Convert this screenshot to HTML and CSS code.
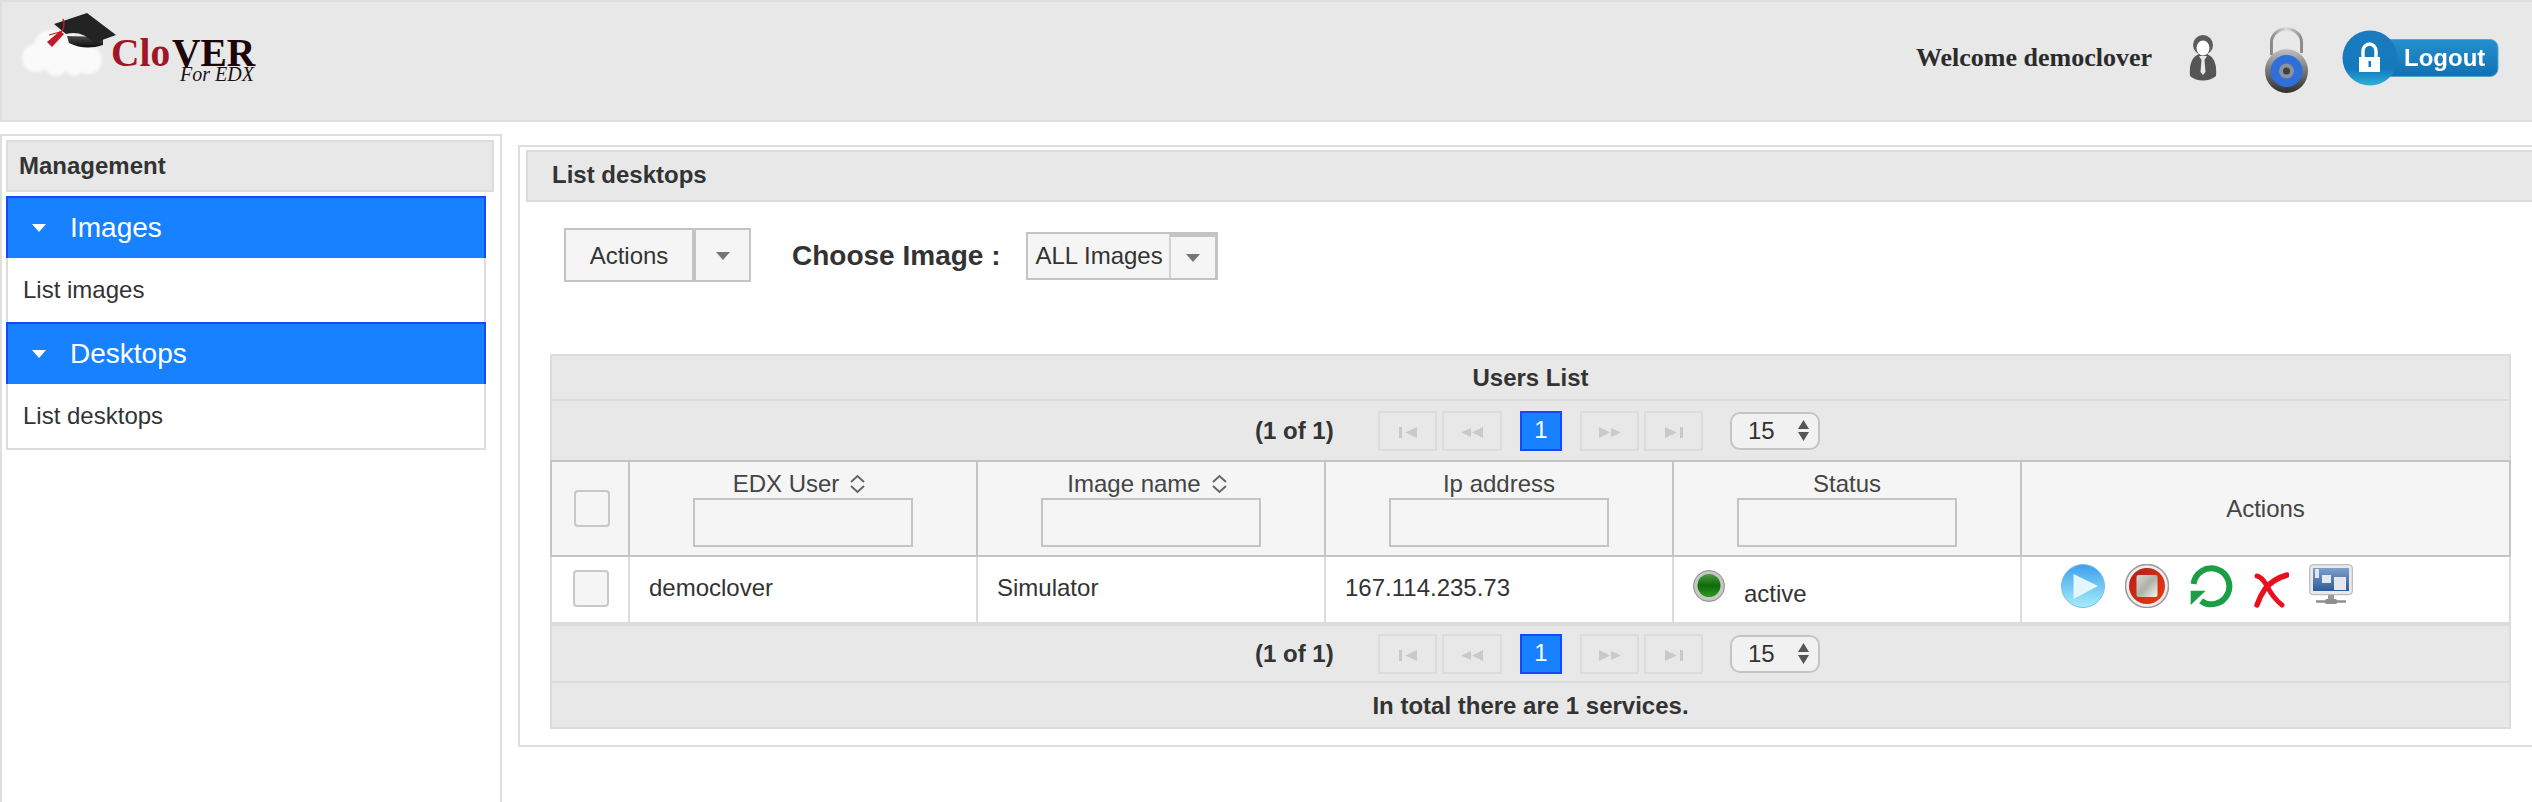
FILE: index.html
```html
<!DOCTYPE html>
<html lang="en">
<head>
<meta charset="utf-8">
<title>CloVER For EDX</title>
<link rel="stylesheet" href="styles.css">
</head>
<body>
<svg class="defs" width="0" height="0" aria-hidden="true">
  <defs>
    <filter id="soft" x="-10%" y="-10%" width="120%" height="120%"><feGaussianBlur stdDeviation="0.5"/></filter>
    <filter id="cloudblur" x="-10%" y="-10%" width="120%" height="120%"><feGaussianBlur stdDeviation="1.4"/></filter>
    <linearGradient id="gCap" x1="0" y1="0" x2="0" y2="1"><stop offset="0" stop-color="#4a4a4a"/><stop offset="1" stop-color="#0c0c0c"/></linearGradient>
    <linearGradient id="gPlay" x1="0" y1="0" x2="0" y2="1"><stop offset="0" stop-color="#3f9eee"/><stop offset="1" stop-color="#a6eefa"/></linearGradient>
    <linearGradient id="gStop" x1="0" y1="0" x2="1" y2="1"><stop offset="0" stop-color="#b81a1a"/><stop offset="1" stop-color="#ea3c10"/></linearGradient>
    <linearGradient id="gSq" x1="0" y1="0" x2="1" y2="1"><stop offset="0" stop-color="#d8d8d4"/><stop offset="0.5" stop-color="#b0b1a9"/><stop offset="1" stop-color="#f6f6f2"/></linearGradient>
    <linearGradient id="gScreen" x1="0" y1="0" x2="0" y2="1"><stop offset="0" stop-color="#7f9fcb"/><stop offset="1" stop-color="#2c5c9b"/></linearGradient>
    <linearGradient id="gLockBody" x1="0" y1="0" x2="0" y2="1"><stop offset="0" stop-color="#c0c0c0"/><stop offset="1" stop-color="#2e2e2e"/></linearGradient>
    <linearGradient id="gShackle" x1="0" y1="0" x2="1" y2="0"><stop offset="0" stop-color="#8a8a8a"/><stop offset="0.5" stop-color="#dcdcdc"/><stop offset="1" stop-color="#8a8a8a"/></linearGradient>
    <linearGradient id="gPill" x1="0" y1="0" x2="0" y2="1"><stop offset="0" stop-color="#2590cd"/><stop offset="1" stop-color="#1170b4"/></linearGradient>
    <linearGradient id="gBall" x1="0" y1="0" x2="0" y2="1"><stop offset="0" stop-color="#1a7cbf"/><stop offset="0.7" stop-color="#1479bb"/><stop offset="1" stop-color="#2fb0da"/></linearGradient>
    <linearGradient id="gDot" x1="0" y1="0" x2="0" y2="1"><stop offset="0" stop-color="#4c9a3f"/><stop offset="0.5" stop-color="#0e6a0a"/><stop offset="1" stop-color="#2f9a1e"/></linearGradient>
  </defs>
</svg>

<header class="topbar">
  <svg class="logo" viewBox="16 10 244 74" width="244" height="74" role="img" aria-label="CloVER For EDX">
    <g filter="url(#cloudblur)" fill="#fafafa">
      <circle cx="36" cy="58" r="14"/><circle cx="50" cy="46" r="16"/><circle cx="70" cy="52" r="17"/>
      <circle cx="88" cy="60" r="14"/><circle cx="56" cy="65" r="11"/><circle cx="74" cy="67" r="9"/>
    </g>
    <path d="M67 36 L103 37 L103 45 Q85 51 69 43 Z" fill="url(#gCap)"/>
    <path d="M54 24 L87 13 L116 35 L94 43 Q82 30 66 34 Z" fill="#232323"/>
    <path d="M63 19 Q66 28 60 33" fill="none" stroke="#c2192a" stroke-width="1.4"/>
    <path d="M60 31 L64 34 L52 47 L47 42 Z" fill="#c2192a"/>
    <path d="M49 35 L60 32" fill="none" stroke="#c2192a" stroke-width="1.2"/>
    <text class="logo-clo" x="111" y="66">Clo</text>
    <text class="logo-ver" x="172" y="66">VER</text>
    <text class="logo-for" x="180" y="81">For EDX</text>
  </svg>
  <div class="userbar">
    <span class="welcome">Welcome democlover</span>
    <svg class="ico-user" viewBox="0 0 30 48" width="30" height="48" aria-hidden="true">
      <path d="M2 42 C1 30 4 23 11 20 L19 20 C26 23 29 30 28 42 C21 48 9 48 2 42 Z" fill="#555"/>
      <circle cx="15" cy="11" r="10" fill="#5c5c5c"/>
      <ellipse cx="15" cy="14" rx="6.5" ry="7.5" fill="#fff"/>
      <path d="M11 22 L19 22 L16.5 26 L17.5 38 L15 41 L12.5 38 L13.5 26 Z" fill="#e8e8e8"/>
    </svg>
    <svg class="ico-lock" viewBox="0 0 43 66" width="43" height="66" aria-hidden="true">
      <path d="M6.5 28 V15 a15 13 0 0 1 30 0 V26" fill="none" stroke="url(#gShackle)" stroke-width="3"/>
      <ellipse cx="21.5" cy="44" rx="21.5" ry="22" fill="url(#gLockBody)"/>
      <circle cx="21.5" cy="44" r="16" fill="#2f6fd8"/>
      <circle cx="21.5" cy="44" r="7.5" fill="#8d929a"/>
      <circle cx="21.5" cy="44" r="3.5" fill="#3d4048"/>
    </svg>
    <svg class="ico-logout" viewBox="0 0 157 56" width="157" height="56" role="img" aria-label="Logout">
      <rect x="30" y="9.5" width="126" height="37" rx="8" fill="url(#gPill)" stroke="#4fa7d6"/>
      <circle cx="28" cy="28" r="27.5" fill="url(#gBall)"/>
      <path d="M21 28 V21 a6.5 7 0 0 1 13 0 V28" fill="none" stroke="#fff" stroke-width="3.4"/>
      <rect x="17" y="27" width="21" height="15" fill="#fff"/>
      <rect x="26.5" y="31" width="2.5" height="6" fill="#1479bb"/>
      <text class="logout-text" x="62" y="36">Logout</text>
    </svg>
  </div>
</header>

<div class="page">
  <aside class="sidebar">
    <div class="side-title">Management</div>
    <div class="accordion">
      <div class="acc-head"><span class="acc-arrow"></span>Images</div>
      <div class="acc-body">List images</div>
      <div class="acc-head"><span class="acc-arrow"></span>Desktops</div>
      <div class="acc-body acc-last">List desktops</div>
    </div>
  </aside>

  <main class="panel">
    <h1 class="panel-title">List desktops</h1>
    <div class="panel-body">
      <div class="toolbar">
        <div class="split">
          <span class="split-label">Actions</span>
          <span class="split-drop"><span class="tri"></span></span>
        </div>
        <span class="choose">Choose Image :</span>
        <div class="combo">
          <span class="combo-label">ALL Images</span>
          <span class="combo-drop"><span class="tri"></span></span>
        </div>
      </div>

      <section class="dt">
        <div class="dt-title">Users List</div>
        <div class="dt-pager dt-pager-top">
          <span class="pg-count">(1 of 1)</span>
          <span class="pg-btn"><svg viewBox="0 0 18 11" width="18" height="11"><path d="M0 0h3v11H0zM18 0v11L6 5.5z"/></svg></span>
          <span class="pg-btn pg-prev"><svg viewBox="0 0 22 11" width="22" height="11"><path d="M10 1v9L0 5.5zM22 0v11L11 5.5z"/></svg></span>
          <span class="pg-cur">1</span>
          <span class="pg-btn"><svg viewBox="0 0 22 11" width="22" height="11"><path d="M0 0v11l11-5.5zM12 1v9l10-4.5z"/></svg></span>
          <span class="pg-btn pg-last"><svg viewBox="0 0 18 11" width="18" height="11"><path d="M0 0v11l12-5.5zM15 0h3v11h-3z"/></svg></span>
          <span class="pg-size">15<svg viewBox="0 0 11 21" width="11" height="21"><path d="M5.5 0L11 9H0zM0 12h11l-5.5 9z"/></svg></span>
        </div>
        <table class="grid">
          <colgroup>
            <col class="c-check"><col class="c-data"><col class="c-data"><col class="c-data"><col class="c-data"><col class="c-act">
          </colgroup>
          <thead>
            <tr>
              <th class="th-mid"><span class="check check-head"></span></th>
              <th><span class="th-label th-sorted">EDX User<svg class="sort" viewBox="0 0 17 20" width="17" height="20"><path d="M2 8l6.5-6 6.5 6M2 12l6.5 6 6.5-6"/></svg></span><input class="filter" type="text" aria-label="EDX User"></th>
              <th><span class="th-label th-sorted">Image name<svg class="sort" viewBox="0 0 17 20" width="17" height="20"><path d="M2 8l6.5-6 6.5 6M2 12l6.5 6 6.5-6"/></svg></span><input class="filter" type="text" aria-label="Image name"></th>
              <th><span class="th-label">Ip address</span><input class="filter" type="text" aria-label="Ip address"></th>
              <th><span class="th-label">Status</span><input class="filter" type="text" aria-label="Status"></th>
              <th class="th-mid">Actions</th>
            </tr>
          </thead>
          <tbody>
            <tr>
              <td><span class="check check-row"></span></td>
              <td class="cell-text">democlover</td>
              <td class="cell-text">Simulator</td>
              <td class="cell-text">167.114.235.73</td>
              <td class="cell-status">
                <div class="status">
                  <svg class="dot" viewBox="0 0 32 32" width="32" height="32" aria-hidden="true">
                    <circle cx="16" cy="16" r="15.5" fill="#c4c8c2" stroke="#8c8c8c"/>
                    <circle cx="16" cy="15.5" r="11.5" fill="url(#gDot)"/>
                  </svg>
                  <span class="status-text">active</span>
                </div>
              </td>
              <td class="cell-icons">
                <div class="icons">
                  <svg viewBox="0 0 44 44" width="44" height="44" aria-hidden="true">
                    <circle cx="22" cy="22" r="21.5" fill="url(#gPlay)" stroke="#7db9e8"/>
                    <path d="M12.5 10 L37 22 L12.5 35 Z" fill="#eefbfe" opacity=".92"/>
                  </svg>
                  <svg viewBox="0 0 44 44" width="44" height="44" aria-hidden="true">
                    <circle cx="22" cy="22" r="21.5" fill="#eee" stroke="#9a9a9a" stroke-width="1.5"/>
                    <circle cx="22" cy="22" r="18" fill="url(#gStop)"/>
                    <rect x="11.5" y="11" width="21" height="22" rx="2" fill="url(#gSq)"/>
                  </svg>
                  <svg viewBox="0 0 44 44" width="44" height="44" aria-hidden="true">
                    <path d="M4.5 20 A18 18 0 1 1 12 37" fill="none" stroke="#1b9e46" stroke-width="6"/>
                    <path d="M1.7 26.7 H16.7 L1.7 41 Z" fill="#1b9e46"/>
                  </svg>
                  <svg class="ico-x" viewBox="0 0 36 36" width="36" height="36" aria-hidden="true">
                    <g fill="none" stroke="#e8101c" stroke-linecap="round">
                      <path d="M4 4 Q9 5 14 14 Q20 26 29 33" stroke-width="5"/>
                      <path d="M34 3 Q20 7 12 17 Q7 24 4 33" stroke-width="5.5"/>
                    </g>
                  </svg>
                  <svg viewBox="0 0 44 42" width="44" height="42" aria-hidden="true">
                    <rect x="19" y="30" width="6" height="6" fill="#9a9a9a"/>
                    <path d="M7 37.5h30" stroke="#8a8a8a" stroke-width="2.4"/>
                    <rect x="16" y="35" width="12" height="5" rx="1.5" fill="#8f8f8f"/>
                    <rect x=".7" y=".7" width="42.6" height="30" rx="3" fill="#e9e9e9" stroke="#b0b0b0"/>
                    <rect x="4" y="4" width="36" height="23" fill="url(#gScreen)"/>
                    <rect x="6" y="5" width="4" height="9" fill="#dfe6ef"/>
                    <rect x="13" y="11" width="9" height="8" fill="#e4e8ee"/>
                    <rect x="25" y="13" width="12" height="13" fill="#e4e8ee"/>
                  </svg>
                </div>
              </td>
            </tr>
          </tbody>
        </table>
        <div class="dt-pager dt-pager-bottom">
          <span class="pg-count">(1 of 1)</span>
          <span class="pg-btn"><svg viewBox="0 0 18 11" width="18" height="11"><path d="M0 0h3v11H0zM18 0v11L6 5.5z"/></svg></span>
          <span class="pg-btn pg-prev"><svg viewBox="0 0 22 11" width="22" height="11"><path d="M10 1v9L0 5.5zM22 0v11L11 5.5z"/></svg></span>
          <span class="pg-cur">1</span>
          <span class="pg-btn"><svg viewBox="0 0 22 11" width="22" height="11"><path d="M0 0v11l11-5.5zM12 1v9l10-4.5z"/></svg></span>
          <span class="pg-btn pg-last"><svg viewBox="0 0 18 11" width="18" height="11"><path d="M0 0v11l12-5.5zM15 0h3v11h-3z"/></svg></span>
          <span class="pg-size">15<svg viewBox="0 0 11 21" width="11" height="21"><path d="M5.5 0L11 9H0zM0 12h11l-5.5 9z"/></svg></span>
        </div>
        <div class="dt-footer">In total there are 1 services.</div>
      </section>
    </div>
  </main>
</div>
</body>
</html>
```

FILE: styles.css
```css
* { box-sizing: border-box; }

html, body {
  margin: 0;
  padding: 0;
  background: #fff;
}

body {
  height: 802px;
  overflow: hidden;
  font-family: "Liberation Sans", Arial, sans-serif;
  font-size: 24px;
  line-height: 28px;
  color: #333;
}

.defs { display: block; height: 0; }

/* Top bar */
.topbar {
  height: 122px;
  background: #e8e8e8;
  border: 2px solid #dedede;
  border-right: 0;
  display: flex;
  align-items: flex-start;
  justify-content: space-between;
  padding: 8px 33px 0 14px;
}

.logo { display: block; flex: none; }
.logo-clo, .logo-ver {
  font-family: "Liberation Serif", "Times New Roman", serif;
  font-weight: 700;
  font-size: 39.5px;
}
.logo-clo { fill: #a11626; }
.logo-ver { fill: #1c060a; }
.logo-for {
  font-family: "Liberation Serif", "Times New Roman", serif;
  font-style: italic;
  font-size: 20px;
  fill: #1c1214;
}

.userbar {
  display: flex;
  align-items: center;
  height: 112px;
  margin-top: -8px;
}
.welcome {
  font-family: "Liberation Serif", "Times New Roman", serif;
  font-weight: 700;
  font-size: 26px;
  color: #2b2b2b;
  margin-right: 36px;
}
.ico-user { margin-right: 47px; flex: none; filter: blur(.5px); }
.ico-lock { margin-right: 34px; margin-top: 4px; flex: none; filter: blur(.4px); }
.ico-logout { flex: none; filter: blur(.3px); }
.logout-text {
  font-family: "Liberation Sans", Arial, sans-serif;
  font-weight: 700;
  font-size: 24px;
  fill: #fff;
}

/* Page columns */
.page {
  display: flex;
  align-items: flex-start;
  margin-top: 12px;
}

/* Sidebar */
.sidebar {
  flex: none;
  width: 502px;
  height: 668px;
  border: 2px solid #dedede;
  border-bottom: 0;
  padding: 4px 6px 0 4px;
}
.side-title {
  height: 52px;
  background: #e8e8e8;
  border: 2px solid #dcdcdc;
  padding: 10px 11px;
  font-weight: 700;
}
.accordion {
  width: 480px;
  margin-top: 4px;
}
.acc-head {
  height: 62px;
  background: #1781ff;
  border: 2px solid #1548ff;
  border-bottom: 0;
  color: #fff;
  font-size: 28px;
  display: flex;
  align-items: center;
  padding: 0 0 0 24px;
  line-height: 32px;
}
.acc-arrow {
  width: 0;
  height: 0;
  border-left: 7.5px solid transparent;
  border-right: 7.5px solid transparent;
  border-top: 8px solid #fff;
  margin-right: 24px;
  flex: none;
}
.acc-body {
  height: 64px;
  border-left: 2px solid #dcdcdc;
  border-right: 2px solid #dcdcdc;
  padding: 18px 0 0 15px;
  background: #fff;
}
.acc-last {
  height: 66px;
  border-bottom: 2px solid #dcdcdc;
}

/* Main panel */
.panel {
  flex: none;
  width: 2014px;
  margin: 11px 0 0 16px;
  border: 2px solid #dedede;
  border-right: 0;
  padding-top: 3px;
}
.panel-title {
  margin: 0 0 0 6px;
  height: 52px;
  background: #e8e8e8;
  border: 2px solid #dcdcdc;
  border-right: 0;
  padding: 9px 0 0 24px;
  font-size: 24px;
  line-height: 28px;
  font-weight: 700;
}
.panel-body {
  padding: 26px 21px 16px 30px;
}

/* Toolbar */
.toolbar {
  display: flex;
  align-items: center;
  height: 54px;
  margin-left: 14px;
}
.split {
  display: flex;
  height: 54px;
  flex: none;
}
.split-label, .split-drop {
  display: flex;
  align-items: center;
  justify-content: center;
  background: #f5f5f5;
  border: 2px solid #c4c4c4;
  padding-top: 2px;
}
.split-label { width: 130px; }
.split-drop { width: 57px; }
.tri {
  width: 0;
  height: 0;
  border-left: 7.5px solid transparent;
  border-right: 7.5px solid transparent;
  border-top: 8px solid #757575;
}
.choose {
  font-size: 28px;
  font-weight: 700;
  margin: 2px 26px 0 41px;
  flex: none;
}
.combo {
  display: flex;
  width: 192px;
  height: 48px;
  border: 2px solid #c4c4c4;
  background: #f5f5f5;
  margin-top: 2px;
  flex: none;
}
.combo-label {
  width: 141px;
  padding: 8px 0 0 7px;
  white-space: nowrap;
}
.combo-drop {
  flex: 1;
  display: flex;
  align-items: center;
  justify-content: center;
  border-left: 2px solid #d2d2d2;
  border-top: 3px solid #c4c4c4;
  border-right: 1px solid #c4c4c4;
}

/* Data table */
.dt {
  width: 1961px;
  margin-top: 72px;
}
.dt-title {
  height: 47px;
  background: #e8e8e8;
  border: 2px solid #dcdcdc;
  text-align: center;
  font-weight: 700;
  line-height: 43px;
}
.dt-pager {
  background: #e8e8e8;
  border-left: 2px solid #dcdcdc;
  border-right: 2px solid #dcdcdc;
  display: flex;
  align-items: center;
  justify-content: center;
  padding-left: 14px;
}
.dt-pager-top { height: 59px; }
.dt-pager-bottom {
  height: 61px;
  border-top: 4px solid #dcdcdc;
  border-bottom: 2px solid #dcdcdc;
}
.pg-count {
  width: 78px;
  font-weight: 700;
  white-space: nowrap;
  margin-right: 45px;
}
.pg-btn {
  width: 59px;
  height: 40px;
  border: 2px solid #dcdcdc;
  display: flex;
  align-items: center;
  justify-content: center;
  padding-top: 4px;
  margin-right: 5px;
}
.pg-btn svg { fill: #c9c9c9; display: block; }
.pg-prev { margin-right: 18px; width: 60px; }
.pg-last { margin-right: 27px; }
.pg-cur {
  width: 42px;
  height: 40px;
  background: #1781ff;
  border: 2px solid #1548ff;
  color: #fff;
  text-align: center;
  font-size: 24px;
  line-height: 34px;
  margin-right: 18px;
}
.pg-size {
  width: 90px;
  height: 38px;
  border: 2px solid #c4c4c4;
  border-radius: 10px;
  background: #f1f1f1;
  display: flex;
  align-items: center;
  justify-content: space-between;
  padding: 0 9px 0 16px;
}
.pg-size svg { fill: #555; display: block; }

.grid {
  width: 1961px;
  table-layout: fixed;
  border-collapse: separate;
  border-spacing: 0;
}
.c-check { width: 78px; }
.c-data { width: 348px; }
.c-act { width: 491px; }

.grid th {
  height: 97px;
  background: #f5f5f5;
  border-top: 2px solid #c4c4c4;
  border-bottom: 2px solid #c4c4c4;
  border-left: 2px solid #c4c4c4;
  padding: 8px 0 0;
  font-weight: 400;
  color: #444;
  vertical-align: top;
  text-align: center;
}
.grid th:last-child { border-right: 2px solid #c4c4c4; }
.grid .th-mid { padding: 0; vertical-align: middle; }

.th-label {
  display: flex;
  align-items: center;
  justify-content: center;
  height: 28px;
  white-space: nowrap;
}
.th-sorted { padding-right: 7px; }
.sort {
  fill: none;
  stroke: #666;
  stroke-width: 2;
  margin-left: 10px;
  flex: none;
}
.filter {
  display: block;
  width: 220px;
  height: 49px;
  margin: 0 auto;
  padding: 0;
  background: #f5f5f5;
  border: 2px solid #c4c4c4;
  border-radius: 0;
  outline: 0;
}
.check {
  display: block;
  width: 36px;
  height: 37px;
  background: #f5f5f5;
  border: 2px solid #c8c8c8;
  border-radius: 4px;
}
.check-head { margin-left: 22px; }
.check-row { margin: -3px 0 0 21px; }

.grid td {
  height: 65px;
  border-left: 2px solid #dcdcdc;
  padding: 0;
  vertical-align: middle;
}
.grid td:last-child { border-right: 2px solid #dcdcdc; }
.grid .cell-text { padding: 0 0 3px 19px; }
.grid .cell-status { padding: 13px 0 0 19px; vertical-align: top; }
.grid .cell-icons { padding: 7px 0 0 39px; vertical-align: top; }

.status {
  display: flex;
  align-items: flex-start;
}
.dot { flex: none; display: block; }
.status-text { margin: 10px 0 0 19px; }
.icons {
  display: flex;
  align-items: flex-start;
  gap: 20px;
}
.icons svg { display: block; flex: none; filter: blur(.4px); }
.icons .ico-x { margin-top: 8px; }

.dt-footer {
  height: 46px;
  background: #e8e8e8;
  border: 2px solid #dcdcdc;
  border-top: 0;
  text-align: center;
  font-weight: 700;
  line-height: 46px;
}
```
